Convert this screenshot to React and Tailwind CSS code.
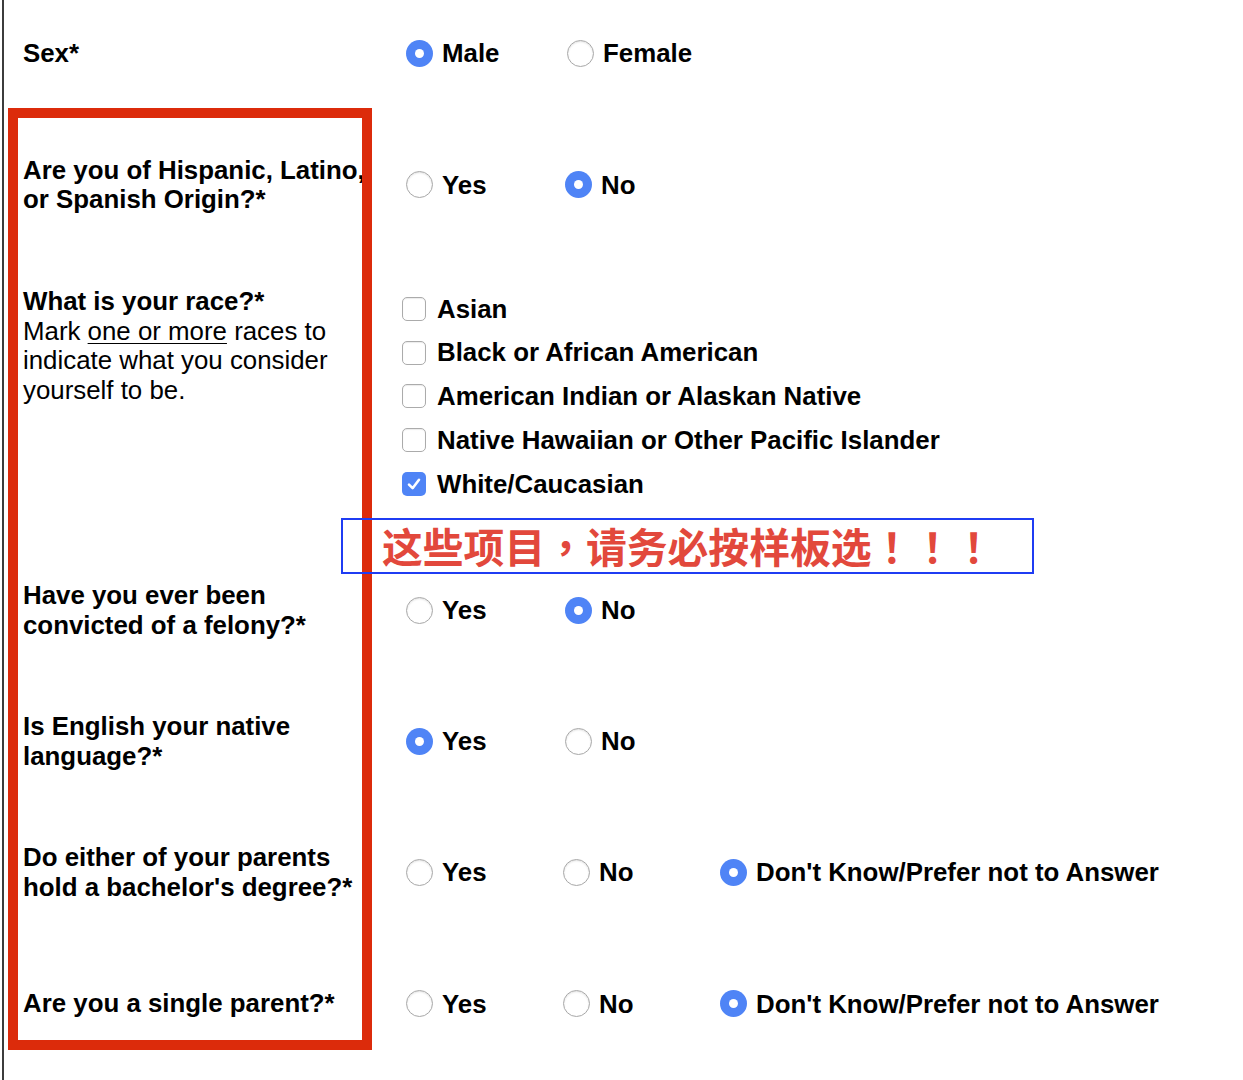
import React from "react";

function Radio({ checked }) {
  if (checked) {
    return (
      <span className="w-[27px] h-[27px] rounded-full bg-[#4f84f6] flex items-center justify-center shrink-0">
        <span className="w-[9px] h-[9px] rounded-full bg-white" />
      </span>
    );
  }
  return (
    <span className="w-[27px] h-[27px] rounded-full border border-[#a8a8a8] bg-white shadow-[inset_0_1px_2px_rgba(0,0,0,0.12)] shrink-0" />
  );
}

function Option({ label, checked, w }) {
  return (
    <div className={`flex items-center ${w}`}>
      <Radio checked={checked} />
      <span className="ml-[9px] font-bold whitespace-nowrap">{label}</span>
    </div>
  );
}

function Checkbox({ checked }) {
  if (checked) {
    return (
      <span className="w-[24px] h-[24px] rounded-[5px] bg-[#4f84f6] flex items-center justify-center shrink-0">
        <svg width="18" height="18" viewBox="0 0 18 18">
          <path d="M4 9.6 L7.6 13.2 L14 4.8" fill="none" stroke="white" strokeWidth="2.6" strokeLinecap="round" strokeLinejoin="round" />
        </svg>
      </span>
    );
  }
  return (
    <span className="w-[24px] h-[24px] rounded-[5px] border border-[#ababab] bg-white shadow-[inset_0_1px_1px_rgba(0,0,0,0.08)] shrink-0" />
  );
}

function Row({ h, label, options }) {
  return (
    <div className={`flex items-center ${h}`}>
      <div className="w-[360px] font-bold leading-[29.5px]">{label}</div>
      <div className="ml-[23px] flex items-center">
        {options.map((o, i) => (
          <Option key={i} label={o.label} checked={o.checked} w={o.w} />
        ))}
      </div>
    </div>
  );
}

export default function App() {
  const races = [
    ["Asian", false],
    ["Black or African American", false],
    ["American Indian or Alaskan Native", false],
    ["Native Hawaiian or Other Pacific Islander", false],
    ["White/Caucasian", true],
  ];
  return (
    <div className="relative min-h-[1080px] bg-white text-black text-[25.85px] font-['Liberation_Sans',Arial,sans-serif]">
      <div className="ml-[2px] min-h-[1080px] border-l-2 border-[#3c3c3c] pl-[19px]">
        <div className="h-[1px]" />
        <Row
          h="h-[105px]"
          label="Sex*"
          options={[
            { label: "Male", checked: true, w: "w-[161px]" },
            { label: "Female", checked: false, w: "" },
          ]}
        />
        <Row
          h="h-[158px]"
          label={<>Are you of Hispanic, Latino, or Spanish Origin?*</>}
          options={[
            { label: "Yes", checked: false, w: "w-[159px]" },
            { label: "No", checked: true, w: "" },
          ]}
        />
        <div className="flex items-start h-[281px] pt-[23px]">
          <div className="w-[360px] leading-[29.5px]">
            <span className="font-bold">What is your race?*</span>
            <br />
            Mark <span className="underline underline-offset-[3px] decoration-1">one or more</span> races to indicate what you consider yourself to be.
          </div>
          <div className="ml-[19px] flex flex-col">
            {races.map(([r, c]) => (
              <div key={r} className="flex items-center h-[43.8px]">
                <Checkbox checked={c} />
                <span className="ml-[11px] font-bold whitespace-nowrap">{r}</span>
              </div>
            ))}
          </div>
        </div>
        <Row
          h="h-[131px]"
          label="Have you ever been convicted of a felony?*"
          options={[
            { label: "Yes", checked: false, w: "w-[159px]" },
            { label: "No", checked: true, w: "" },
          ]}
        />
        <Row
          h="h-[131px]"
          label="Is English your native language?*"
          options={[
            { label: "Yes", checked: true, w: "w-[159px]" },
            { label: "No", checked: false, w: "" },
          ]}
        />
        <Row
          h="h-[131px]"
          label="Do either of your parents hold a bachelor's degree?*"
          options={[
            { label: "Yes", checked: false, w: "w-[157px]" },
            { label: "No", checked: false, w: "w-[157px]" },
            { label: "Don't Know/Prefer not to Answer", checked: true, w: "" },
          ]}
        />
        <Row
          h="h-[132px]"
          label="Are you a single parent?*"
          options={[
            { label: "Yes", checked: false, w: "w-[157px]" },
            { label: "No", checked: false, w: "w-[157px]" },
            { label: "Don't Know/Prefer not to Answer", checked: true, w: "" },
          ]}
        />
      </div>

      {/* red annotation frame */}
      <div className="absolute left-[8px] top-[108px] w-[364px] h-[942px] border-[10px] border-[#dc2b0b] pointer-events-none" />

      {/* blue annotation box */}
      <div className="absolute left-[341px] top-[518px] w-[693px] h-[56px] border-2 border-[#1f3cf3] flex items-center pl-[39px]">
        <span className="text-[#e2483c] text-[40.8px] leading-none font-bold font-['Noto_Sans_CJK_TC','Noto_Sans_CJK_SC',sans-serif] whitespace-nowrap">
          这些项目，请务必按样板选！！！
        </span>
      </div>
    </div>
  );
}
